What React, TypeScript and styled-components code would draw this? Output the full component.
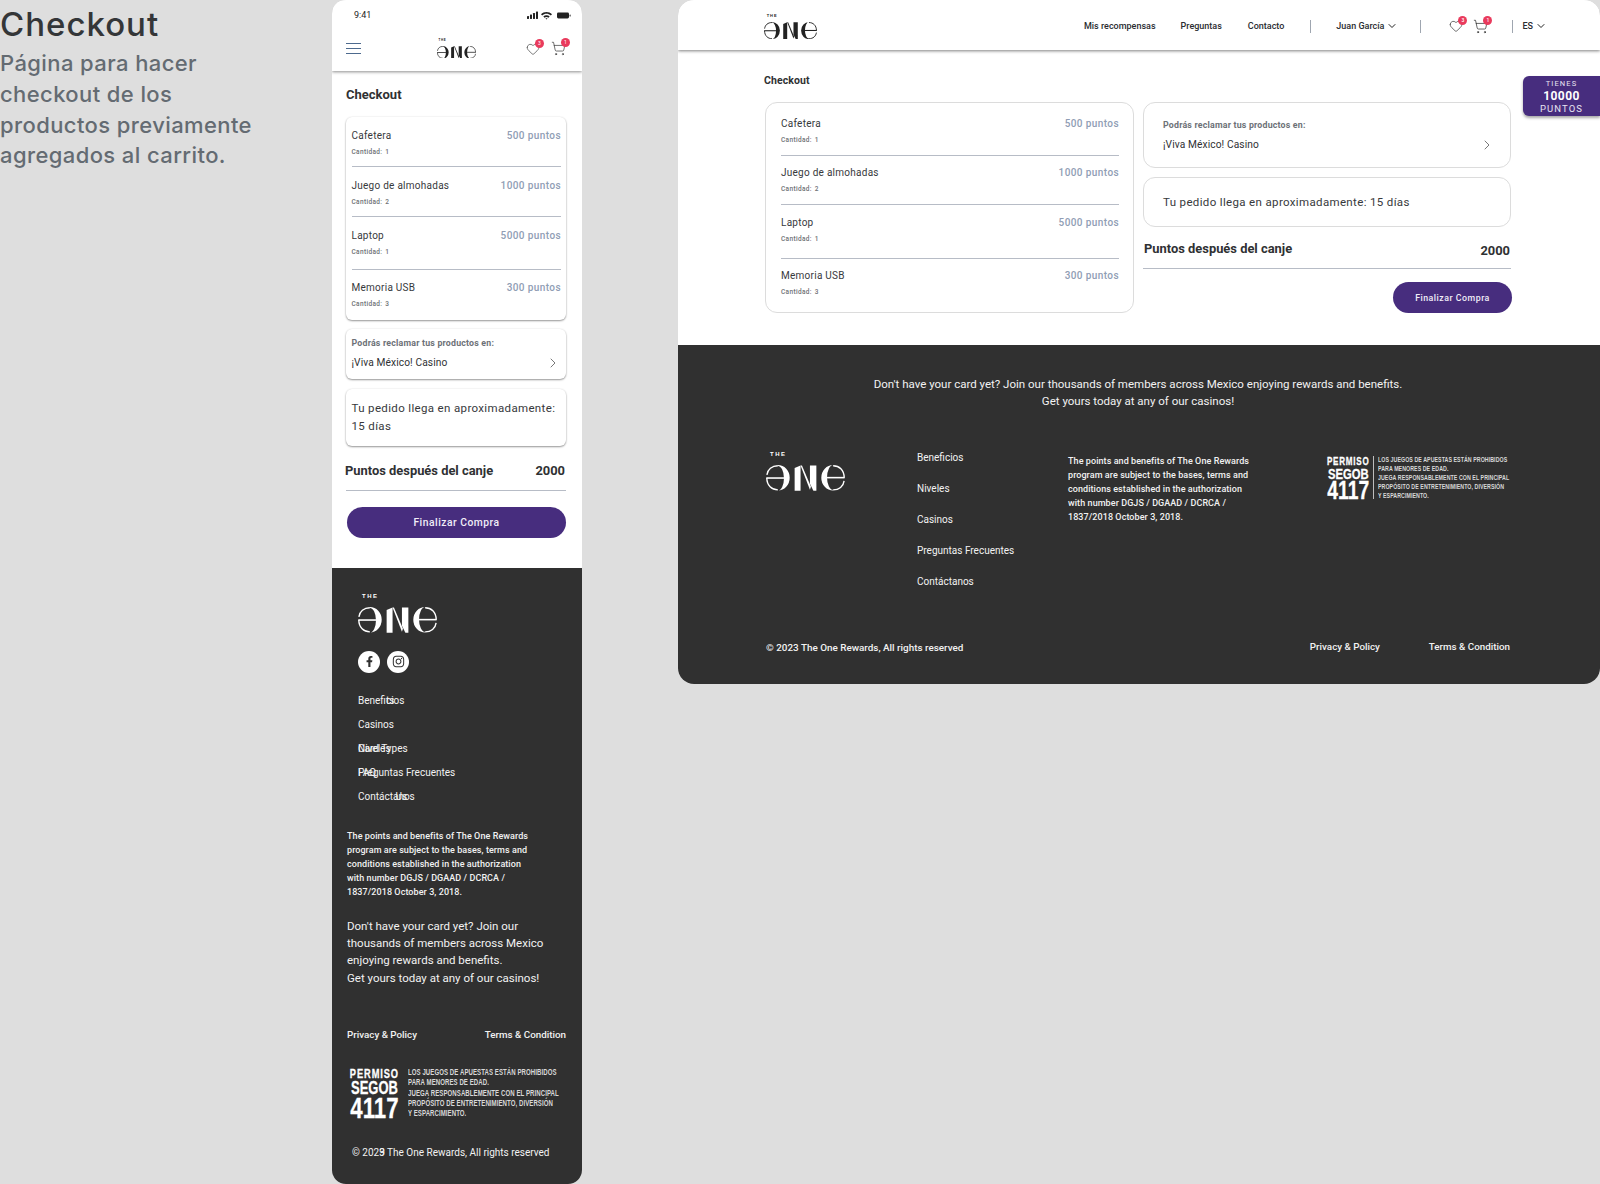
import React from "react";
import styled, { createGlobalStyle } from "styled-components";
import { Heart, ShoppingCart, ChevronDown, ChevronRight } from "lucide-react";
import { FaFacebookF, FaInstagram } from "react-icons/fa";

const Global = createGlobalStyle`
  html, body { margin: 0; padding: 0; background: #dedede; }
  body { font-family: Roboto, "Liberation Sans", sans-serif; width: 1600px; height: 1184px; overflow: hidden; }
  * { box-sizing: border-box; }
`;

const Page = styled.div`
  display: flex;
  align-items: flex-start;
  width: 1600px;
  height: 1184px;
  background: #dedede;
`;

const Intro = styled.section`
  width: 332px;
  flex: none;
  font-family: Inter, sans-serif;
`;
const IntroTitle = styled.h1`
  margin: 0;
  font-size: 33px;
  line-height: 48px;
  font-weight: 500;
  color: #343638;
  letter-spacing: 1px;
`;
const IntroText = styled.p`
  margin: 0;
  width: 270px;
  font-size: 22px;
  line-height: 30.8px;
  font-weight: 500;
  color: #646b72;
  letter-spacing: 0.4px;
`;

const Phone = styled.section`
  width: 250px;
  height: 1184px;
  flex: none;
  display: flex;
  flex-direction: column;
  background: #fff;
  border-radius: 14px;
  overflow: hidden;
`;
const Desktop = styled.section`
  margin-left: 96px;
  width: 922px;
  height: 684px;
  flex: none;
  position: relative;
  display: flex;
  flex-direction: column;
  background: #fff;
  border-radius: 16px;
  overflow: hidden;
`;

const PhoneHeader = styled.header`
  height: 71px;
  flex: none;
  background: #fff;
  box-shadow: 0 1px 3px rgba(0, 0, 0, 0.45);
  position: relative;
  z-index: 1;
`;
const StatusBar = styled.div`
  height: 30px;
  padding: 0 10px 0 22px;
  display: flex;
  align-items: center;
  justify-content: space-between;
  font-size: 9px;
  color: #222;
`;
const PhoneNav = styled.div`
  height: 37px;
  padding: 0 16px 0 14px;
  display: grid;
  grid-template-columns: 1fr auto 1fr;
  align-items: center;
`;
const Burger = styled.div`
  width: 15px;
  display: flex;
  flex-direction: column;
  gap: 3.6px;
  i {
    display: block;
    height: 1px;
    background: #4d6a8e;
  }
`;
const IconGroup = styled.div<{ $gap: number }>`
  display: flex;
  align-items: center;
  justify-content: flex-end;
  gap: ${(p) => p.$gap}px;
`;
const IconWrap = styled.span`
  position: relative;
  display: flex;
  color: #333;
`;
const Badge = styled.span`
  position: absolute;
  top: -3px;
  right: -4px;
  width: 9px;
  height: 9px;
  border-radius: 50%;
  background: #e93a5c;
  color: #fff;
  font-size: 5px;
  line-height: 9px;
  text-align: center;
`;

const LogoWrap = styled.div<{ $w: number; $color: string }>`
  width: ${(p) => p.$w}px;
  display: flex;
  flex-direction: column;
  color: ${(p) => p.$color};
  svg {
    display: block;
    width: ${(p) => p.$w}px;
    height: ${(p) => (p.$w * 26) / 80}px;
  }
`;
const LogoThe = styled.span<{ $w: number }>`
  font-family: "Liberation Sans", sans-serif;
  font-weight: 700;
  font-size: ${(p) => p.$w * 0.075}px;
  line-height: ${(p) => p.$w * 0.1}px;
  letter-spacing: ${(p) => p.$w * 0.02}px;
  margin: 0 0 ${(p) => p.$w * 0.075}px ${(p) => p.$w * 0.05}px;
`;

const Logo = ({ w, color }: { w: number; color: string }) => {
  const half = (
    <>
      <path d="M12 0.1A12 12.9 0 0 1 12 25.9A6 12.1 0 0 0 12 0.9Z" />
      <path d="M12 0.8C6 0.8 1.6 4.4 0.9 10" fill="none" stroke="currentColor" strokeWidth="1.4" />
      <path d="M0.8 13C0.8 21 6 25.2 12 25.2" fill="none" stroke="currentColor" strokeWidth="1.4" />
      <rect x="0.4" y="12.4" width="20" height="1.6" />
    </>
  );
  return (
    <LogoWrap $w={w} $color={color}>
      <LogoThe $w={w}>THE</LogoThe>
      <svg viewBox="0 0 80 26" fill="currentColor" aria-hidden="true">
        {half}
        <path d="M29 3L35 0.5V26H29Z" />
        <path d="M35 0.5H36.4L45.5 22L44.5 25Z" />
        <path d="M44.5 0.5H51V26H48L44.5 19Z" />
        <g transform="rotate(180 40 13)">{half}</g>
      </svg>
    </LogoWrap>
  );
};

const Main = styled.main<{ $wide?: boolean }>`
  flex: none;
  padding: ${(p) => (p.$wide ? "23px 88px 32px 87px" : "16px 16px 30px 14px")};
`;
const Title = styled.h2<{ $wide?: boolean }>`
  margin: 0 ${(p) => (p.$wide ? "0 13px -1px" : "0 14px 0")};
  font-size: ${(p) => (p.$wide ? 10.5 : 13)}px;
  line-height: 16px;
  font-weight: 700;
  color: #2f3133;
  letter-spacing: ${(p) => (p.$wide ? 0.1 : 0)}px;
`;
const Card = styled.div<{ $wide?: boolean }>`
  background: #fff;
  border-radius: ${(p) => (p.$wide ? 12 : 6)}px;
  ${(p) =>
    p.$wide
      ? "border: 1px solid #dcdcdc;"
      : "box-shadow: 0 1px 2px rgba(0,0,0,.4), 0 0 2px rgba(0,0,0,.08);"}
`;
const ItemList = styled(Card)`
  padding: 0 ${(p) => (p.$wide ? 14 : 5)}px 0 ${(p) => (p.$wide ? 15 : 5.5)}px;
`;
const Row = styled.div<{ $pt: number; $pb: number; $last?: boolean }>`
  padding: ${(p) => p.$pt}px 0 ${(p) => p.$pb}px;
  border-bottom: ${(p) => (p.$last ? "none" : "1px solid #b7bcc6")};
`;
const RowTop = styled.div`
  display: flex;
  justify-content: space-between;
  font-size: 10px;
  line-height: 14px;
  letter-spacing: 0.26px;
`;
const ItemName = styled.span`
  color: #37393c;
`;
const ItemPoints = styled.span`
  color: #8f9db4;
  font-weight: 500;
  letter-spacing: 0.4px;
`;
const Qty = styled.div`
  margin-top: 4px;
  font-size: 6.5px;
  line-height: 10px;
  color: #6e7175;
  font-weight: 500;
  letter-spacing: 0.35px;
  word-spacing: 1px;
`;
const Pickup = styled(Card)`
  height: ${(p) => (p.$wide ? 66 : 50)}px;
  margin-top: ${(p) => (p.$wide ? 0 : 9)}px;
  padding: ${(p) => (p.$wide ? "17px 15px 0 19px" : "9px 5px 0 5.5px")};
`;
const PickupLabel = styled.div`
  font-size: 8.8px;
  line-height: 10px;
  font-weight: 700;
  color: #6d7177;
  letter-spacing: 0.2px;
`;
const PickupRow = styled.div<{ $wide?: boolean }>`
  margin-top: 7px;
  display: flex;
  align-items: center;
  justify-content: space-between;
  font-size: 10.2px;
  line-height: 14px;
  color: #2f3133;
  letter-spacing: 0.1px;
  svg {
    color: #555;
  }
`;
const Delivery = styled(Card)`
  margin-top: ${(p) => (p.$wide ? 9 : 10)}px;
  padding: ${(p) => (p.$wide ? "15px 19px 15px" : "10px 5.5px 11px")};
  font-size: 11.5px;
  line-height: 18px;
  color: #37393c;
  letter-spacing: 0.35px;
  white-space: nowrap;
`;
const Summary = styled.div<{ $wide?: boolean }>`
  margin-top: ${(p) => (p.$wide ? 13 : 16)}px;
  padding: 0 1px ${(p) => (p.$wide ? 10 : 10)}px ${(p) => (p.$wide ? 1 : 0)}px;
  margin-left: ${(p) => (p.$wide ? 0 : -1)}px;
  display: flex;
  justify-content: space-between;
  align-items: flex-start;
  font-size: 12.9px;
  line-height: 18px;
  font-weight: 700;
  color: #2f3133;
`;
const SummaryValue = styled.span<{ $wide?: boolean }>`
  margin-top: ${(p) => (p.$wide ? 2 : 0)}px;
  margin-bottom: ${(p) => (p.$wide ? -2 : 0)}px;
`;
const SummaryRule = styled.div`
  height: 1px;
  background: #b7bcc6;
`;
const Button = styled.button<{ $wide?: boolean }>`
  display: block;
  margin: ${(p) => (p.$wide ? "13px -1px 0 auto" : "16px 0 0 1px")};
  width: ${(p) => (p.$wide ? "119px" : "219px")};
  height: 31px;
  border: none;
  border-radius: 16px;
  background: #472d7e;
  color: #f1eef8;
  font-family: Roboto, sans-serif;
  font-size: ${(p) => (p.$wide ? 8.8 : 10.3)}px;
  font-weight: 500;
  letter-spacing: 0.5px;
`;

const DeskHeader = styled.header`
  height: 50px;
  flex: none;
  padding: 13px 53px 0 86px;
  display: flex;
  align-items: flex-start;
  justify-content: space-between;
  background: #fff;
  box-shadow: 0 1px 3px rgba(0, 0, 0, 0.5);
  position: relative;
  z-index: 1;
`;
const DeskNav = styled.nav`
  display: flex;
  align-items: center;
  height: 26px;
  font-size: 9px;
  font-weight: 500;
  color: #2a2c30;
`;
const NavLink = styled.a<{ $ml: number }>`
  margin-left: ${(p) => p.$ml}px;
  display: flex;
  align-items: center;
  gap: 2px;
  svg {
    color: #222;
  }
`;
const Sep = styled.span<{ $ml: number }>`
  width: 1px;
  height: 13px;
  background: #9fa6b0;
  margin-left: ${(p) => p.$ml}px;
`;
const Points = styled.aside`
  position: absolute;
  top: 76px;
  right: 0;
  width: 77px;
  height: 40px;
  background: #472d7e;
  border-radius: 6px 0 0 6px;
  box-shadow: 0 2px 3px rgba(0, 0, 0, 0.35);
  z-index: 2;
  display: flex;
  flex-direction: column;
  align-items: center;
  padding-top: 2px;
  color: #e8e4f2;
`;
const PointsSmall = styled.span<{ $size: number; $lh: number }>`
  font-size: ${(p) => p.$size}px;
  line-height: ${(p) => p.$lh}px;
  letter-spacing: 1.1px;
`;
const PointsBig = styled.strong`
  font-size: 12px;
  line-height: 13px;
  color: #fff;
  letter-spacing: 0.4px;
  font-weight: 700;
`;
const Columns = styled.div`
  display: grid;
  grid-template-columns: 369px 368px;
  column-gap: 9px;
`;

const Footer = styled.footer`
  flex: 1;
  background: #303030;
  color: #f2f2f2;
`;
const PhoneFooter = styled(Footer)`
  padding: 25px 15px 0;
`;
const DeskFooter = styled(Footer)`
  padding: 31px 90px 0 88px;
`;
const Indent = styled.div`
  margin-left: 11px;
`;
const Socials = styled.div`
  margin-top: 18px;
  display: flex;
  gap: 7px;
`;
const Social = styled.span`
  width: 22px;
  height: 22px;
  border-radius: 50%;
  background: #fff;
  color: #303030;
  display: flex;
  align-items: center;
  justify-content: center;
`;
const Links = styled.ul<{ $gap: number; $mt: number }>`
  list-style: none;
  margin: ${(p) => p.$mt}px 0 0;
  padding: 0;
  display: flex;
  flex-direction: column;
  gap: ${(p) => p.$gap}px;
  font-size: 10px;
  line-height: 14px;
`;
const LinkStack = styled.li`
  display: grid;
  > span {
    grid-area: 1 / 1;
  }
`;
const Ghost = styled.i`
  font-style: normal;
  visibility: hidden;
`;
const Fine = styled.p<{ $mt: number }>`
  margin: ${(p) => p.$mt}px 0 0;
  font-size: 9px;
  line-height: 14px;
  font-weight: 500;
  letter-spacing: 0.07px;
  white-space: nowrap;
`;
const Join = styled.p`
  margin: 19.5px 0 0;
  font-size: 11.5px;
  line-height: 17.2px;
  white-space: nowrap;
`;
const LegalRow = styled.div`
  margin: 41px 1px 0 0;
  display: flex;
  justify-content: space-between;
  font-size: 9.8px;
  line-height: 14px;
  font-weight: 500;
`;
const PermisoBox = styled.div<{ $size: number; $mt?: number }>`
  margin-top: ${(p) => p.$mt ?? 0}px;
  display: flex;
  align-items: center;
  font-size: ${(p) => p.$size}px;
  font-family: "Liberation Sans", sans-serif;
  white-space: nowrap;
`;
const PermisoStamp = styled.div`
  width: 6.6em;
  margin: 0 -1.7em 0 0.3em;
  transform: scaleX(0.74);
  transform-origin: left center;
  display: flex;
  flex-direction: column;
  align-items: center;
  font-weight: 700;
  color: #fff;
  -webkit-text-stroke: 0.3px #fff;
`;
const StampLine = styled.span<{ $k: number; $h: number; $ls?: number }>`
  font-size: ${(p) => p.$k}em;
  line-height: ${(p) => p.$h}em;
  letter-spacing: ${(p) => p.$ls ?? 0}em;
`;
const PermisoRule = styled.span`
  width: 1px;
  height: 5em;
  margin: 0 0.45em 0 0.4em;
  background: #bdbdbd;
`;
const PermisoText = styled.div`
  transform: scaleX(0.73);
  transform-origin: left center;
  font-size: 0.83em;
  line-height: 1.25em;
  letter-spacing: 0.012em;
  font-weight: 700;
  color: #d8d8d8;
`;
const Copy = styled.div`
  margin: 27px 0 0 5px;
  display: grid;
  font-size: 10px;
  line-height: 14px;
  > span {
    grid-area: 1 / 1;
  }
`;
const JoinCenter = styled.p`
  margin: 0;
  text-align: center;
  font-size: 11.5px;
  line-height: 17px;
`;
const FooterGrid = styled.div`
  margin-top: 41px;
  display: grid;
  grid-template-columns: 151px 151px 258px auto;
  align-items: start;
`;
const FinePad = styled.div`
  padding-top: 3px;
`;
const PermisoPad = styled.div`
  padding-top: 4px;
  margin-left: -2px;
`;
const DeskBottom = styled.div`
  margin-top: 52px;
  display: flex;
  align-items: center;
  font-size: 9.9px;
  line-height: 14px;
  font-weight: 500;
`;
const DeskBottomLinks = styled.div`
  margin: -2px 0 0 auto;
  display: flex;
  gap: 49px;
  font-size: 9.8px;
`;

const StatusIcons = () => (
  <svg width="45" height="9" viewBox="0 0 45 9" fill="#222" aria-hidden="true">
    <rect x="0" y="5" width="2" height="3" rx=".4" />
    <rect x="3" y="3.6" width="2" height="4.4" rx=".4" />
    <rect x="6" y="2" width="2" height="6" rx=".4" />
    <rect x="9" y="0.6" width="2" height="7.4" rx=".4" />
    <path d="M14 3.2C17 .2 22 .2 25 3.2L23.8 4.5C21.4 2.2 17.6 2.2 15.2 4.5ZM16.3 5.5C18 3.9 21 3.9 22.7 5.5L21.5 6.7C20.4 5.7 18.6 5.7 17.5 6.7ZM19.5 8.4L18.5 7.5C19 7.1 20 7.1 20.5 7.5Z" />
    <rect x="30" y="1.5" width="12" height="6" rx="1.4" />
    <rect x="42.6" y="3.4" width="1" height="2.2" rx=".5" />
  </svg>
);

const items = [
  { name: "Cafetera", pts: "500 puntos", qty: 1 },
  { name: "Juego de almohadas", pts: "1000 puntos", qty: 2 },
  { name: "Laptop", pts: "5000 puntos", qty: 1 },
  { name: "Memoria USB", pts: "300 puntos", qty: 3 },
];
const phonePads = [[12, 9], [12, 9], [12, 12], [11, 11]];
const deskPads = [[13.5, 10], [10.5, 10], [11, 13.5], [10, 13]];

const Items = ({ wide }: { wide?: boolean }) => {
  const pads = wide ? deskPads : phonePads;
  return (
    <ItemList $wide={wide}>
      {items.map((it, i) => (
        <Row key={it.name} $pt={pads[i][0]} $pb={pads[i][1]} $last={i === 3}>
          <RowTop>
            <ItemName>{it.name}</ItemName>
            <ItemPoints>{it.pts}</ItemPoints>
          </RowTop>
          <Qty>Cantidad: {it.qty}</Qty>
        </Row>
      ))}
    </ItemList>
  );
};

const PickupCard = ({ wide }: { wide?: boolean }) => (
  <Pickup $wide={wide}>
    <PickupLabel>Podrás reclamar tus productos en:</PickupLabel>
    <PickupRow $wide={wide}>
      ¡Viva México! Casino
      <ChevronRight size={16} strokeWidth={1.2} />
    </PickupRow>
  </Pickup>
);

const Permiso = ({ size, mt }: { size: number; mt?: number }) => (
  <PermisoBox $size={size} $mt={mt}>
    <PermisoStamp>
      <StampLine $k={1.25} $h={1.12} $ls={0.1}>PERMISO</StampLine>
      <StampLine $k={1.75} $h={0.9}>SEGOB</StampLine>
      <StampLine $k={3} $h={0.72}>4117</StampLine>
    </PermisoStamp>
    <PermisoRule />
    <PermisoText>
      LOS JUEGOS DE APUESTAS ESTÁN PROHIBIDOS
      <br />
      PARA MENORES DE EDAD.
      <br />
      JUEGA RESPONSABLEMENTE CON EL PRINCIPAL
      <br />
      PROPÓSITO DE ENTRETENIMIENTO, DIVERSIÓN
      <br />
      Y ESPARCIMIENTO.
    </PermisoText>
  </PermisoBox>
);

const HeartIcon = ({ n }: { n: number }) => (
  <IconWrap>
    <Heart size={14} strokeWidth={1.1} />
    <Badge>{n}</Badge>
  </IconWrap>
);
const CartIcon = ({ n }: { n: number }) => (
  <IconWrap>
    <ShoppingCart size={15} strokeWidth={1.1} />
    <Badge>{n}</Badge>
  </IconWrap>
);

const deskLinks = ["Beneficios", "Niveles", "Casinos", "Preguntas Frecuentes", "Contáctanos"];
const fine = (
  <>
    The points and benefits of The One Rewards
    <br />
    program are subject to the bases, terms and
    <br />
    conditions established in the authorization
    <br />
    with number DGJS / DGAAD / DCRCA /
    <br />
    1837/2018 October 3, 2018.
  </>
);

export default function App() {
  return (
    <Page>
      <Global />
      <Intro>
        <IntroTitle>Checkout</IntroTitle>
        <IntroText>Página para hacer checkout de los productos previamente agregados al carrito.</IntroText>
      </Intro>

      <Phone>
        <PhoneHeader>
          <StatusBar>
            <span>9:41</span>
            <StatusIcons />
          </StatusBar>
          <PhoneNav>
            <Burger>
              <i />
              <i />
              <i />
            </Burger>
            <Logo w={39} color="#222" />
            <IconGroup $gap={11}>
              <HeartIcon n={3} />
              <CartIcon n={1} />
            </IconGroup>
          </PhoneNav>
        </PhoneHeader>
        <Main>
          <Title>Checkout</Title>
          <Items />
          <PickupCard />
          <Delivery>
            Tu pedido llega en aproximadamente:
            <br />
            15 días
          </Delivery>
          <Summary>
            <span>Puntos después del canje</span>
            <SummaryValue>2000</SummaryValue>
          </Summary>
          <SummaryRule />
          <Button>Finalizar Compra</Button>
        </Main>
        <PhoneFooter>
          <Indent>
            <Logo w={79} color="#fff" />
            <Socials>
              <Social>
                <FaFacebookF size={11} />
              </Social>
              <Social>
                <FaInstagram size={13} />
              </Social>
            </Socials>
            <Links $gap={10} $mt={21}>
              <LinkStack>
                <span>Beneficios</span>
                <span>
                  <Ghost>Benefi</Ghost>ts
                </span>
              </LinkStack>
              <LinkStack>
                <span>Casinos</span>
              </LinkStack>
              <LinkStack>
                <span>Niveles</span>
                <span>Card Types</span>
              </LinkStack>
              <LinkStack>
                <span>Preguntas Frecuentes</span>
                <span>FAQ</span>
              </LinkStack>
              <LinkStack>
                <span>Contáctanos</span>
                <span>
                  <Ghost>Contact</Ghost> Us
                </span>
              </LinkStack>
            </Links>
          </Indent>
          <Fine $mt={25}>{fine}</Fine>
          <Join>
            Don't have your card yet? Join our
            <br />
            thousands of members across Mexico
            <br />
            enjoying rewards and benefits.
            <br />
            Get yours today at any of our casinos!
          </Join>
          <LegalRow>
            <span>Privacy &amp; Policy</span>
            <span>Terms &amp; Condition</span>
          </LegalRow>
          <Permiso size={10} mt={25} />
          <Copy>
            <span>© 2023 The One Rewards, All rights reserved</span>
            <span>
              <Ghost>© 202</Ghost>9
            </span>
          </Copy>
        </PhoneFooter>
      </Phone>

      <Desktop>
        <DeskHeader>
          <Logo w={53} color="#222" />
          <DeskNav>
            <NavLink $ml={0}>Mis recompensas</NavLink>
            <NavLink $ml={25}>Preguntas</NavLink>
            <NavLink $ml={26}>Contacto</NavLink>
            <Sep $ml={26} />
            <NavLink $ml={25}>
              Juan García <ChevronDown size={12} strokeWidth={2} />
            </NavLink>
            <Sep $ml={22} />
            <NavLink $ml={28}>
              <HeartIcon n={3} />
            </NavLink>
            <NavLink $ml={10}>
              <CartIcon n={1} />
            </NavLink>
            <Sep $ml={24} />
            <NavLink $ml={9}>
              ES <ChevronDown size={12} strokeWidth={2} />
            </NavLink>
          </DeskNav>
        </DeskHeader>
        <Points>
          <PointsSmall $size={7.5} $lh={11.5}>TIENES</PointsSmall>
          <PointsBig>10000</PointsBig>
          <PointsSmall $size={9.5} $lh={11}>PUNTOS</PointsSmall>
        </Points>
        <Main $wide>
          <Title $wide>Checkout</Title>
          <Columns>
            <Items wide />
            <div>
              <PickupCard wide />
              <Delivery $wide>Tu pedido llega en aproximadamente: 15 días</Delivery>
              <Summary $wide>
                <span>Puntos después del canje</span>
                <SummaryValue $wide>2000</SummaryValue>
              </Summary>
              <SummaryRule />
              <Button $wide>Finalizar Compra</Button>
            </div>
          </Columns>
        </Main>
        <DeskFooter>
          <JoinCenter>
            Don't have your card yet? Join our thousands of members across Mexico enjoying rewards and benefits.
            <br />
            Get yours today at any of our casinos!
          </JoinCenter>
          <FooterGrid>
            <Logo w={79} color="#fff" />
            <Links $gap={17} $mt={0}>
              {deskLinks.map((l) => (
                <LinkStack key={l}>
                  <span>{l}</span>
                </LinkStack>
              ))}
            </Links>
            <FinePad>
              <Fine $mt={0}>{fine}</Fine>
            </FinePad>
            <PermisoPad>
              <Permiso size={8.7} />
            </PermisoPad>
          </FooterGrid>
          <DeskBottom>
            <span>© 2023 The One Rewards, All rights reserved</span>
            <DeskBottomLinks>
              <span>Privacy &amp; Policy</span>
              <span>Terms &amp; Condition</span>
            </DeskBottomLinks>
          </DeskBottom>
        </DeskFooter>
      </Desktop>
    </Page>
  );
}
